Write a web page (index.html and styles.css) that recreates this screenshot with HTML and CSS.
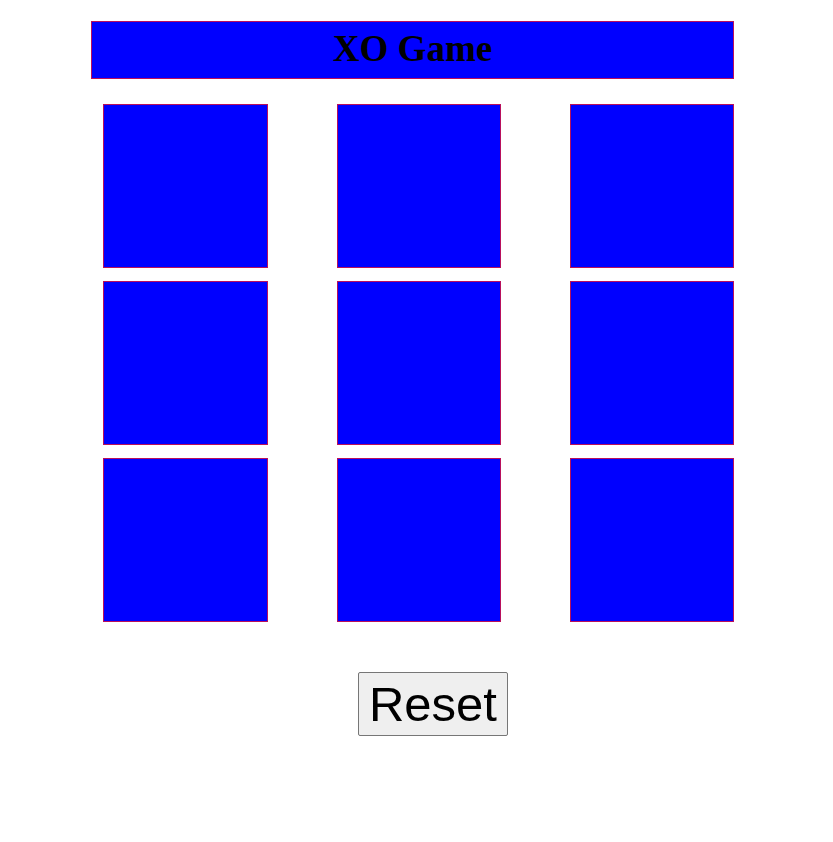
FILE: index.html
```html
<!DOCTYPE html>
<html>
<head>
<meta charset="utf-8">
<link rel="stylesheet" href="styles.css">
</head>
<body>
<div class="game">
  <h1 class="title">XO Game</h1>
  <div class="board">
    <div class="cell"></div>
    <div class="cell"></div>
    <div class="cell"></div>
    <div class="cell"></div>
    <div class="cell"></div>
    <div class="cell"></div>
    <div class="cell"></div>
    <div class="cell"></div>
    <div class="cell"></div>
  </div>
  <div class="controls">
    <button class="reset">Reset</button>
  </div>
</div>
</body>
</html>
```
FILE: styles.css
```css
html, body {
  margin: 0;
  padding: 0;
  background: #ffffff;
}
.game {
  width: 643px;
  margin: 21px 0 0 91px;
}
.title {
  box-sizing: border-box;
  height: 58px;
  margin: 0;
  background: #0000ff;
  border: 1px solid #b8105c;
  font-family: "Liberation Serif", serif;
  font-weight: bold;
  font-size: 37px;
  line-height: 54px;
  text-align: center;
  color: #000;
}
.board {
  display: grid;
  grid-template-columns: 165px 164px 164px;
  grid-auto-rows: 164px;
  column-gap: 69px;
  row-gap: 13px;
  margin: 25px 0 0 12px;
}
.cell {
  box-sizing: border-box;
  background: #0000ff;
  border: 1px solid #b8105c;
}
.controls {
  margin: 50px 0 0 267px;
}
.reset {
  box-sizing: border-box;
  width: 150px;
  height: 64px;
  padding: 0 8px;
  font-family: "Liberation Sans", Arial, sans-serif;
  font-size: 49px;
  background: #efefef;
  border: 1px solid #767676;
  border-radius: 2px;
  color: #000;
}
```
